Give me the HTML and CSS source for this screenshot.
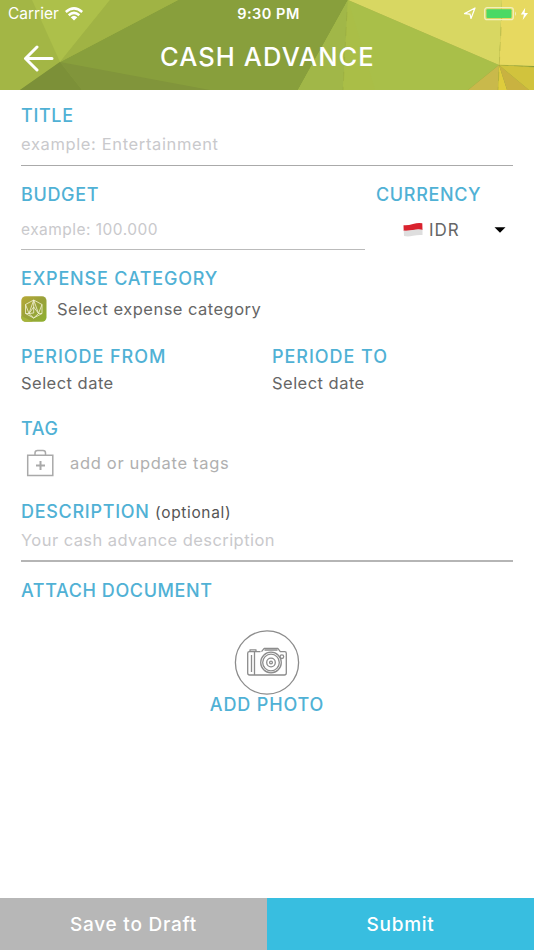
FILE: index.html
```html
<!DOCTYPE html>
<html lang="en">
  <head>
    <meta charset="UTF-8" />
    <meta name="viewport" content="width=device-width, initial-scale=1.0" />
    <title>Cash Advance</title>
    <link rel="stylesheet" href="styles.css">
  </head>
  <body>
    <header class="header">
      <!-- Low poly background -->
      <svg class="header-bg" viewBox="0 0 534 90" preserveAspectRatio="none">
        <rect width="534" height="90" fill="#889f3c" />
        <path d="M0 0H178L60 62L20 90H0z" fill="#a3b645" />
        <path d="M32 0H110L60 62z" fill="#adc04a" />
        <path d="M110 0H178L60 62z" fill="#a0b344" />
        <path d="M60 62L20 90H82z" fill="#7c9038" />
        <path d="M60 62L82 90H210z" fill="#81953b" />
        <path d="M348 0L298 90H468L499 65z" fill="#a9bf49" />
        <path d="M348 0L298 90H343z" fill="#a1b748" />
        <path d="M348 0L343 90H375z" fill="#aabe47" />
        <path d="M348 0H502L499 65z" fill="#d8d762" />
        <path d="M502 0H534V66L499 65z" fill="#e7d960" />
        <path d="M499 65L468 90H498z" fill="#c9b94b" />
        <path d="M499 65L498 90H507z" fill="#dfcc3c" />
        <path d="M499 65L507 90H529z" fill="#c9b240" />
        <path d="M499 65L534 67V90H529z" fill="#d1c33d" />
        <path d="M347 12L343 90M502 12L498 90M499 65L534 67" fill="none" stroke="#8f9b35" stroke-opacity=".3" stroke-dasharray="9 6" />
      </svg>
      <div class="status-bar">
        <div class="status-left">
          <span class="carrier">Carrier</span>
          <svg width="18" height="14" viewBox="0 0 18 14" fill="none" stroke="#fff" stroke-width="2.5">
            <path d="M.8 5Q9-2.2 17.2 5M3.7 8.2Q9 3.6 14.3 8.2" />
            <path d="M5.7 10.3Q9 7.3 12.3 10.3L9 13.5z" fill="#fff" stroke="none" />
          </svg>
        </div>
        <span class="clock">9:30 PM</span>
        <div class="status-right">
          <svg width="66" height="16" viewBox="0 0 66 16">
            <path d="M1.5 7.6L12 2L8 12.5L7 8.2z" fill="none" stroke="#fff" stroke-width="1.2" stroke-linejoin="round" />
            <rect x="21.7" y="1.7" width="28.6" height="12" rx="2.5" fill="none" stroke="#f1f0bd" stroke-width="1.3" />
            <rect x="23.5" y="3.3" width="25" height="8.8" rx="1" fill="#4bd964" />
            <path d="M52 5.5Q54 7.7 52 10z" fill="#f1f0bd" />
            <path d="M62.2 1.8L57.8 8.6H61L59.7 14L65 7H61.6z" fill="#fff" />
          </svg>
        </div>
      </div>
      <div class="nav">
        <svg class="back" width="32" height="28" viewBox="0 0 32 28" fill="none" stroke="#fff" stroke-width="3" stroke-linecap="round" stroke-linejoin="round">
          <path d="M15 3L3.5 14.5L15 26M3.5 14.5H30" />
        </svg>
        <h1>CASH ADVANCE</h1>
      </div>
    </header>

    <main class="form">
      <section class="field field-title">
        <h2 class="l-title">TITLE</h2>
        <p class="placeholder p-title">example: Entertainment</p>
      </section>

      <div class="budget-row">
        <section class="field field-budget">
          <h2 class="l-budget">BUDGET</h2>
          <p class="placeholder p-budget">example: 100.000</p>
        </section>
        <section class="field-currency">
          <h2 class="l-currency">CURRENCY</h2>
          <div class="select">
            <svg width="20" height="16" viewBox="0 0 20 16">
              <path d="M.5 3.2Q5 3.6 10 2T19.3 1.2L19.5 8Q15 7.3 10 8.2T.7 9z" fill="#d9222e" />
              <path d="M.7 8.6Q5 9 10 7.9T19.5 7.7V13Q15 12.6 10 13.8T1 14z" fill="#dedede" />
            </svg>
            <span class="idr">IDR</span>
            <svg class="caret" width="12" height="6" viewBox="0 0 12 6"><path d="M.5.3H11.5L6 5.8z" fill="#000" /></svg>
          </div>
        </section>
      </div>

      <section class="field-category">
        <h2 class="l-category">EXPENSE CATEGORY</h2>
        <div class="category">
          <svg width="26" height="26" viewBox="0 0 26 26">
            <defs>
              <linearGradient id="badge" x1="0" y1="0" x2="1" y2="1">
                <stop offset="0" stop-color="#b8a936" />
                <stop offset=".5" stop-color="#98a13a" />
                <stop offset="1" stop-color="#8fb22f" />
              </linearGradient>
            </defs>
            <rect x=".3" y=".3" width="25.2" height="25.4" rx="4.5" fill="url(#badge)" />
            <path d="M.5 20L12 25.7H5Q.3 25.7 .3 21z" fill="#a5b43a" />
            <path d="M12.7 4L21 8.5V17.5L12.7 22L4.5 17.5V8.5zM12.7 4L8 17.5L4.5 8.5M12.7 4L17.5 17.5L21 8.5M12.7 4V17L8 17.5L12.7 22L17.5 17.5L12.7 11L8 17.5L4.5 17.5M17.5 17.5H21" fill="none" stroke="#f4f3d7" stroke-width=".8" stroke-linejoin="round" />
          </svg>
          <p class="p-category">Select expense category</p>
        </div>
      </section>

      <div class="periode-row">
        <section>
          <h2 class="l-periode">PERIODE FROM</h2>
          <p class="date">Select date</p>
        </section>
        <section>
          <h2 class="l-periode">PERIODE TO</h2>
          <p class="date">Select date</p>
        </section>
      </div>

      <section class="field-tag">
        <h2 class="l-tag">TAG</h2>
        <div class="tags">
          <svg width="28" height="28" viewBox="0 0 28 28" fill="none" stroke="#a9a9a9" stroke-width="1.5">
            <path d="M1.7 6.2H26.8V26.4H1.7zM9 6V4Q9 1.5 11.5 1.5H17Q19.5 1.5 19.5 4V6" />
            <path d="M14.5 12V21M10 16.5H19" stroke-width="2" />
          </svg>
          <p class="p-tags">add or update tags</p>
        </div>
      </section>

      <section class="field field-description">
        <h2 class="l-description">DESCRIPTION <small>(optional)</small></h2>
        <p class="placeholder p-description">Your cash advance description</p>
      </section>

      <section class="field-attach">
        <h2 class="l-attach">ATTACH DOCUMENT</h2>
        <div class="photo">
          <svg width="66" height="66" viewBox="0 0 66 66" fill="none" stroke="#8c8c8c" stroke-width="1.3" stroke-linejoin="round">
            <circle cx="33" cy="33.5" r="31.6" />
            <path d="M26.5 22.6H15.3Q13.7 22.6 13.7 24.2V44Q13.7 46 15.7 46H50.3Q52.3 46 52.3 44V24.2Q52.3 22.6 50.7 22.6H46.3L43.8 19.3H30.2L27.5 22.6M16 22.4V20.8H22V22.4M20.5 23V46M17.5 26V43M30.5 21H43.5" />
            <circle cx="37" cy="33.5" r="10.3" fill="#fff" />
            <circle cx="37" cy="33.5" r="8.3" />
            <circle cx="37" cy="33.5" r="4.3" />
            <circle cx="37" cy="33.5" r="1.4" />
            <circle cx="47.9" cy="27.7" r="1.8" />
          </svg>
          <h2 class="l-photo">ADD PHOTO</h2>
        </div>
      </section>
    </main>

    <footer class="footer">
      <button class="btn btn-draft">Save to Draft</button>
      <button class="btn btn-submit">Submit</button>
    </footer>
  </body>
</html>
```

FILE: styles.css
```css
* {
  box-sizing: border-box;
}

body {
  margin: 0;
  height: 100vh;
  display: flex;
  flex-direction: column;
  overflow: hidden;
  background: #fff;
  color: #666;
  font-family: Inter, "Liberation Sans", sans-serif;
  font-size: 16.5px;
}

h1,
h2,
p {
  margin: 0;
  white-space: nowrap;
}

svg {
  display: block;
  flex: none;
}

/* Header */
.header {
  position: relative;
  height: 90px;
  flex: none;
  color: #fff;
}

.header-bg {
  position: absolute;
  inset: 0;
  width: 100%;
  height: 100%;
}

.status-bar {
  position: relative;
  display: grid;
  grid-template-columns: 1fr auto 1fr;
  align-items: center;
  height: 27px;
  padding: 0 5px 0 8px;
}

.status-left {
  display: flex;
  align-items: center;
  gap: 6px;
}

.carrier {
  font-size: 15.5px;
}

.clock {
  font-size: 14.5px;
  font-weight: 600;
  letter-spacing: 0.5px;
}

.status-right {
  display: flex;
  justify-content: flex-end;
}

.nav {
  position: relative;
  display: flex;
  align-items: center;
  height: 61px;
  padding-left: 22px;
}

.nav h1 {
  margin: -2px 0 0 106px;
  font-size: 25.5px;
  font-weight: 500;
  letter-spacing: 1.1px;
}

/* Form */
.form {
  flex: 1;
  padding: 16px 21px 0;
}

h2 {
  color: #50b1d5;
  font-size: 18px;
  font-weight: 500;
  line-height: 20px;
  height: 20px;
  letter-spacing: 0.65px;
}

.l-category {
  letter-spacing: 0.8px;
}

.l-periode {
  letter-spacing: 0.95px;
}

.l-description,
.l-attach {
  letter-spacing: 0.6px;
}

.l-description {
  letter-spacing: 0.7px;
}

.l-photo {
  letter-spacing: 0.85px;
}

p {
  line-height: 24px;
  letter-spacing: 0.47px;
}

.field {
  border-bottom: 1px solid #aaa;
}

.placeholder {
  color: #c9c9cc;
}

.p-title {
  margin-top: 6px;
  letter-spacing: 0.63px;
}

.field-title {
  height: 60px;
}

.budget-row {
  display: flex;
  gap: 11px;
  margin-top: 19px;
}

.field-budget {
  width: 344px;
  height: 65px;
  border-bottom-color: #bbb;
}

.p-budget {
  margin-top: 13px;
  font-size: 15.5px;
}

.field-currency {
  flex: 1;
}

.select {
  display: flex;
  align-items: center;
  height: 24px;
  margin-top: 13px;
  padding: 0 7px 0 27px;
  font-size: 17px;
}

.idr {
  margin-left: 6px;
  letter-spacing: 1px;
}

.caret {
  margin-left: auto;
}

.field-category {
  margin-top: 19px;
}

.category {
  display: flex;
  align-items: center;
  gap: 10px;
  margin-top: 7px;
}

.periode-row {
  display: grid;
  grid-template-columns: 251px 1fr;
  margin-top: 25px;
}

.date {
  margin-top: 4px;
}

.field-tag {
  margin-top: 24px;
}

.tags {
  display: flex;
  align-items: center;
  gap: 16px;
  height: 28px;
  margin-top: 10px;
  padding-left: 5px;
  color: #b0b0b0;
}

.p-tags {
  letter-spacing: 0.68px;
}

.field-description {
  height: 60px;
  margin-top: 25px;
  border-bottom-width: 2px;
  border-bottom-color: #b5b5b5;
}

.p-description {
  margin-top: 6px;
  letter-spacing: 0.44px;
}

small {
  color: #555;
  font-size: 15.5px;
  font-weight: 400;
  letter-spacing: 0.65px;
}

.field-attach {
  margin-top: 19px;
}

.photo {
  display: flex;
  flex-direction: column;
  align-items: center;
  margin-top: 28px;
}

/* Footer */
.footer {
  display: flex;
  flex: none;
  height: 52px;
}

.btn {
  flex: 1;
  border: none;
  padding: 0;
  color: #fff;
  font-family: inherit;
  font-size: 19px;
  font-weight: 500;
  letter-spacing: 0.75px;
}

.btn-draft {
  background: #b7b7b7;
}

.btn-submit {
  background: #38bee0;
}
```
